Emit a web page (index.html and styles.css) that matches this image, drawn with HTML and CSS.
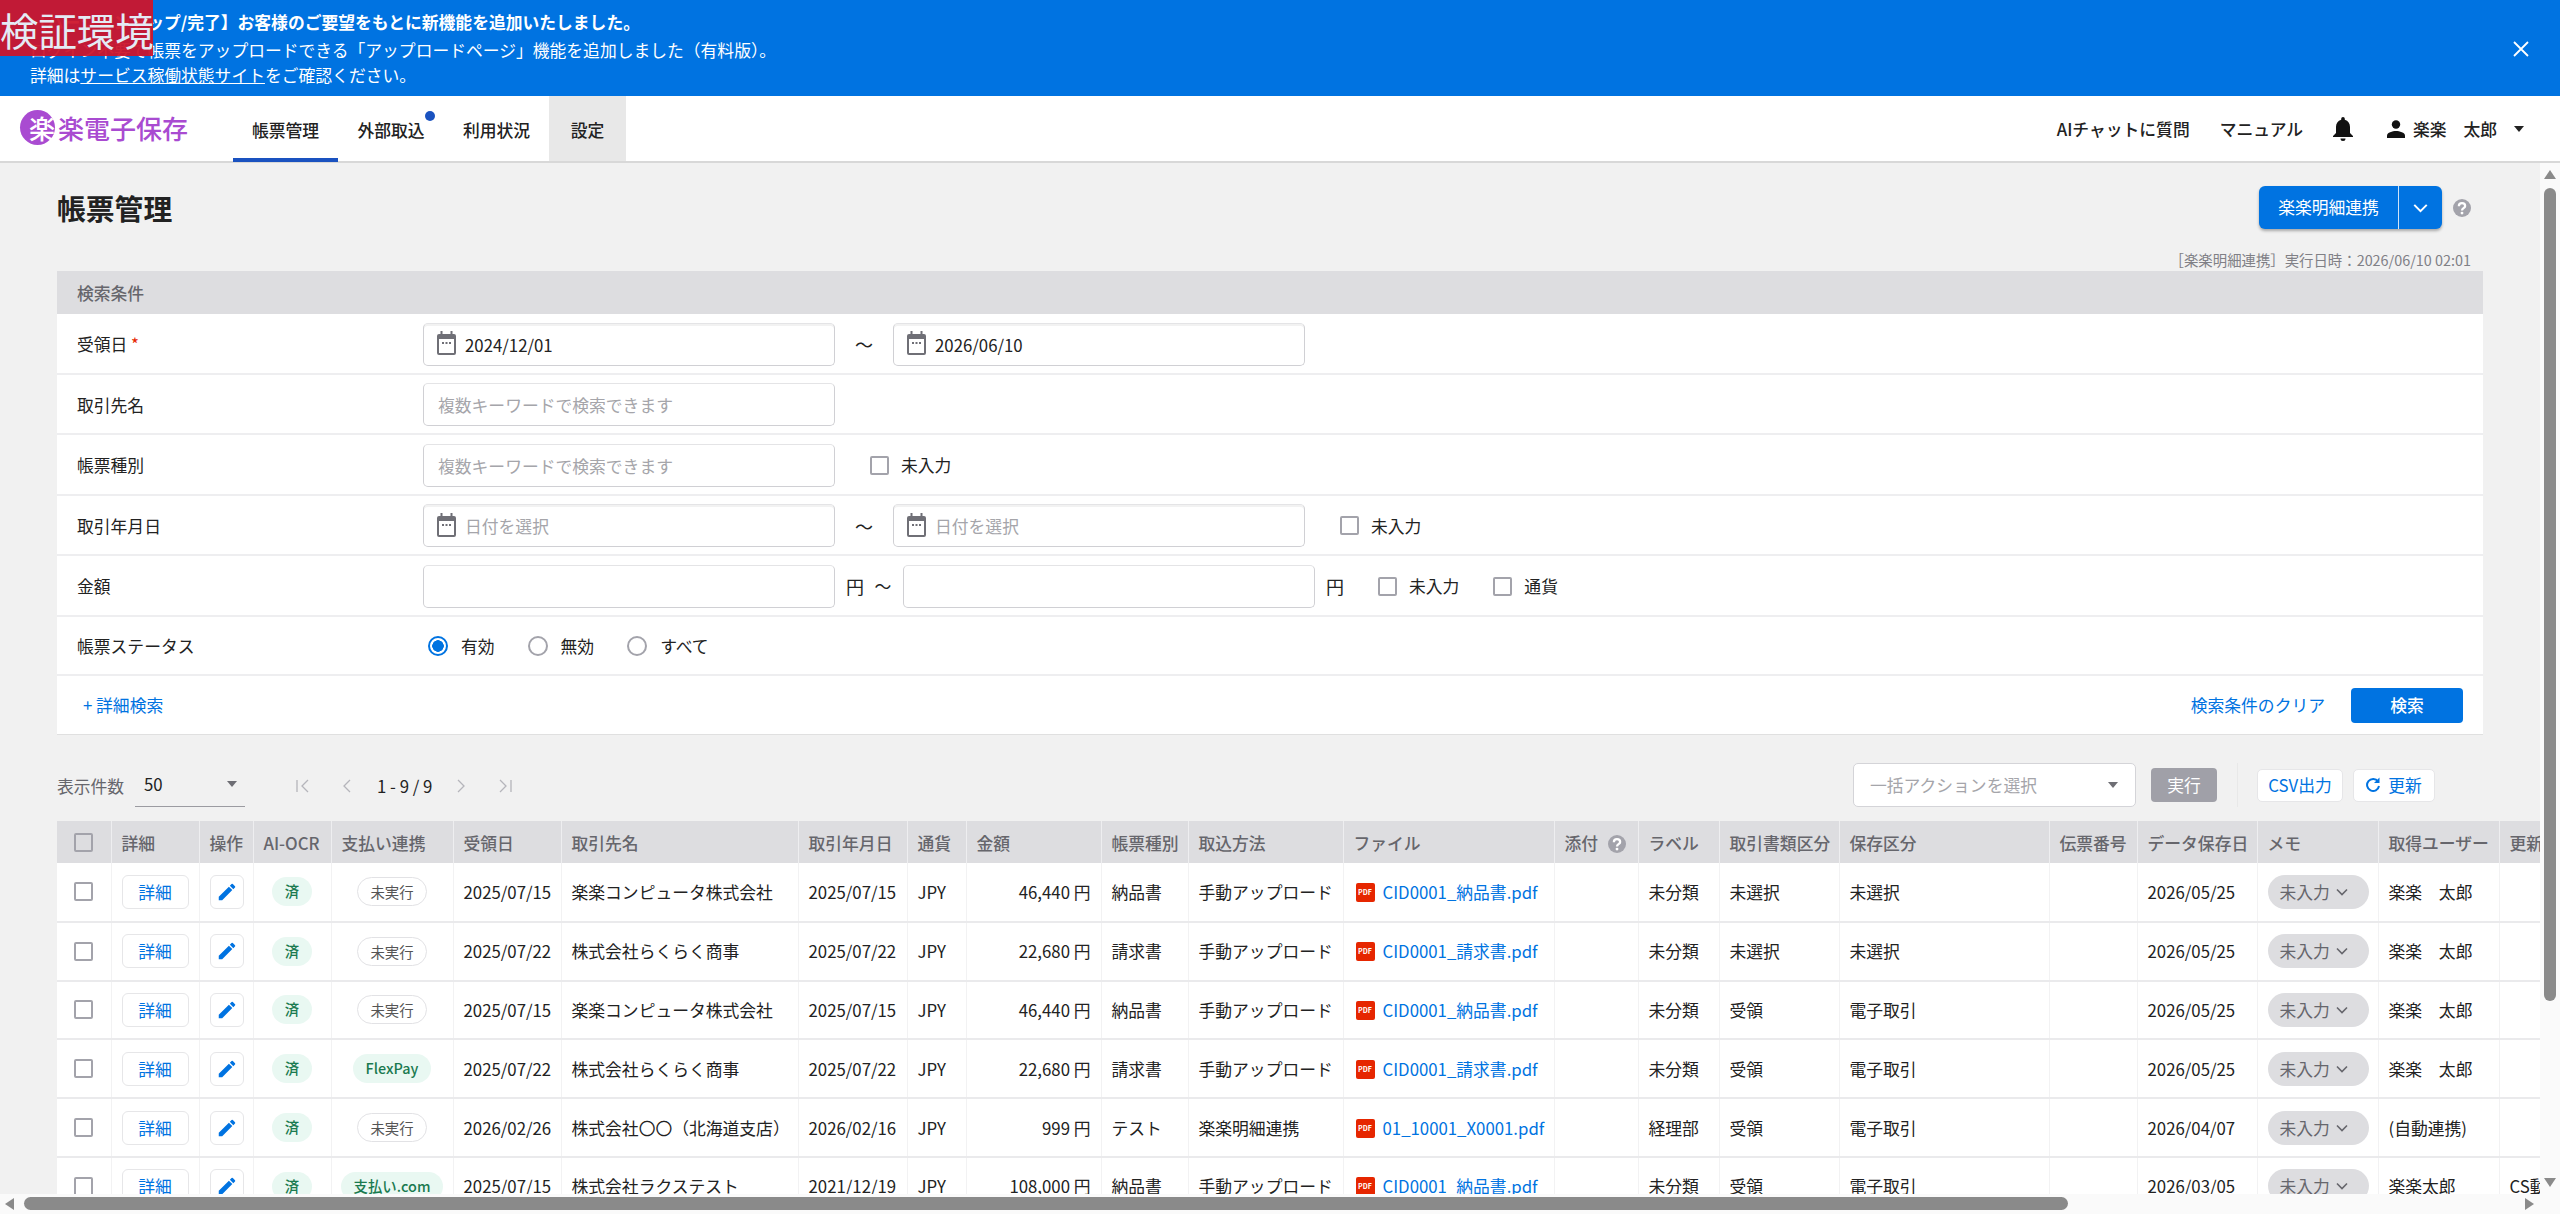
FILE: index.html
```html
<!DOCTYPE html>
<html lang="ja">
<head>
<meta charset="utf-8">
<title>楽楽電子保存</title>
<link rel="stylesheet" href="styles.css">
</head>
<body>
<svg class="defs" width="0" height="0" aria-hidden="true">
  <defs>
    <symbol id="cal" viewBox="0 0 19 24"><path fill="#6f6f76" d="M3.500 0h2v3h8V0h2v3H17a2 2 0 0 1 2 2v17a2 2 0 0 1-2 2H2a2 2 0 0 1-2-2V5a2 2 0 0 1 2-2h1.500z"/><rect x="2" y="8" width="15" height="14" fill="#fff"/><rect x="5" y="11" width="2" height="2" fill="#6f6f76"/><rect x="8.500" y="11" width="2" height="2" fill="#6f6f76"/><rect x="12" y="11" width="2" height="2" fill="#6f6f76"/></symbol>
    <symbol id="pen" viewBox="0 0 24 24"><path fill="#0073e1" d="M3 17.250V21h3.750L17.810 9.940l-3.750-3.750L3 17.250zM20.710 7.040a1 1 0 0 0 0-1.410l-2.340-2.340a1 1 0 0 0-1.410 0l-1.830 1.830 3.750 3.750 1.830-1.830z"/></symbol>
    <symbol id="help" viewBox="0 0 24 24"><circle cx="12" cy="12" r="12" fill="#a3a3ab"/><path fill="none" stroke="#fff" stroke-width="3" d="M7.800 9.500c0-2.500 1.900-4 4.200-4s4.200 1.500 4.200 3.700c0 3-4.200 3-4.200 6"/><circle cx="12" cy="18.800" r="1.900" fill="#fff"/></symbol>
    <symbol id="chev" viewBox="0 0 12 8"><path fill="none" stroke="currentColor" stroke-width="1.600" d="M1 1.500l5 5 5-5"/></symbol>
  </defs>
</svg>
<div class="env-tag">検証環境</div>
<div class="page">
  <header class="banner">
    <div class="banner-text">
      <p class="banner-title">【バージョンアップ/完了】お客様のご要望をもとに新機能を追加いたしました。</p>
      <p>ログイン不要で帳票をアップロードできる「アップロードページ」機能を追加しました（有料版）。</p>
      <p>詳細は<a class="banner-link">サービス稼働状態サイト</a>をご確認ください。</p>
    </div>
    <svg class="banner-close" viewBox="0 0 16 16" width="16" height="16"><path stroke="#fff" stroke-width="1.800" d="M1 1l14 14M15 1L1 15"/></svg>
  </header>
  <nav class="nav">
    <div class="logo">
      <span class="logo-mark">楽</span><span class="logo-text">楽電子保存</span>
    </div>
    <a class="tab tab-active">帳票管理</a>
    <a class="tab tab-dot">外部取込</a>
    <a class="tab">利用状況</a>
    <a class="tab tab-shade">設定</a>
    <div class="nav-right">
      <a class="nav-link">AIチャットに質問</a>
      <a class="nav-link">マニュアル</a>
      <svg class="bell" viewBox="0 0 20 24" width="20" height="24"><path fill="#111" d="M10 0a1.800 1.800 0 0 1 1.800 1.800v.9C15.200 3.600 17 6.500 17 10v6l3 3v1H0v-1l3-3v-6c0-3.500 1.800-6.400 5.200-7.300v-.9A1.800 1.800 0 0 1 10 0zM7.500 21.500h5a2.500 2.500 0 0 1-5 0z"/></svg>
      <div class="user">
        <svg viewBox="0 0 18 18" width="18" height="18"><circle cx="9" cy="4.500" r="4.200" fill="#111"/><path fill="#111" d="M0 18v-2.500C0 12.500 5.500 11 9 11s9 1.500 9 4.500V18z"/></svg>
        <span>楽楽　太郎</span>
        <i class="caret caret-dark"></i>
      </div>
    </div>
  </nav>
  <main class="main">
    <div class="content">
      <div class="title-row">
        <h1>帳票管理</h1>
        <div class="title-actions">
          <div class="split-btn"><span class="split-main">楽楽明細連携</span><span class="split-arrow"><svg width="15" height="10"><use href="#chev"/></svg></span></div>
          <svg class="help" width="18" height="18"><use href="#help"/></svg>
        </div>
      </div>
      <p class="run-date">［楽楽明細連携］実行日時：2026/06/10 02:01</p>

      <section class="panel">
        <div class="panel-head">検索条件</div>
        <div class="frow">
          <label class="flabel">受領日 <em>*</em></label>
          <div class="input input-date"><svg width="19" height="24"><use href="#cal"/></svg><span>2024/12/01</span></div>
          <span class="tilde">～</span>
          <div class="input input-date"><svg width="19" height="24"><use href="#cal"/></svg><span>2026/06/10</span></div>
        </div>
        <div class="frow">
          <label class="flabel">取引先名</label>
          <div class="input"><span class="ph">複数キーワードで検索できます</span></div>
        </div>
        <div class="frow">
          <label class="flabel">帳票種別</label>
          <div class="input"><span class="ph">複数キーワードで検索できます</span></div>
          <label class="check check-a"><i class="box"></i>未入力</label>
        </div>
        <div class="frow">
          <label class="flabel">取引年月日</label>
          <div class="input input-date"><svg width="19" height="24"><use href="#cal"/></svg><span class="ph">日付を選択</span></div>
          <span class="tilde">～</span>
          <div class="input input-date"><svg width="19" height="24"><use href="#cal"/></svg><span class="ph">日付を選択</span></div>
          <label class="check check-a"><i class="box"></i>未入力</label>
        </div>
        <div class="frow">
          <label class="flabel">金額</label>
          <div class="input"></div>
          <span class="yen">円</span><span class="tilde-s">～</span>
          <div class="input"></div>
          <span class="yen">円</span>
          <label class="check check-b"><i class="box"></i>未入力</label>
          <label class="check check-c"><i class="box"></i>通貨</label>
        </div>
        <div class="frow frow-radio">
          <label class="flabel">帳票ステータス</label>
          <label class="radio radio-first"><i class="dot dot-on"></i>有効</label>
          <label class="radio"><i class="dot"></i>無効</label>
          <label class="radio"><i class="dot"></i>すべて</label>
        </div>
        <div class="frow frow-foot">
          <a class="more">+ 詳細検索</a>
          <a class="clear">検索条件のクリア</a>
          <span class="search-btn">検索</span>
        </div>
      </section>

      <div class="tools">
        <span class="tools-label">表示件数</span>
        <div class="per-page"><span>50</span><i class="caret"></i></div>
        <div class="pager">
          <svg width="16" height="16" viewBox="0 0 16 16"><path fill="none" stroke="#b5b5bb" stroke-width="1.300" d="M2 2v12M13 2L7 8l6 6"/></svg>
          <svg width="16" height="16" viewBox="0 0 16 16"><path fill="none" stroke="#b5b5bb" stroke-width="1.300" d="M11 2L5 8l6 6"/></svg>
          <span>1 - 9 / 9</span>
          <svg width="16" height="16" viewBox="0 0 16 16"><path fill="none" stroke="#b5b5bb" stroke-width="1.300" d="M5 2l6 6-6 6"/></svg>
          <svg width="16" height="16" viewBox="0 0 16 16"><path fill="none" stroke="#b5b5bb" stroke-width="1.300" d="M3 2l6 6-6 6M14 2v12"/></svg>
        </div>
        <div class="bulk"><span class="ph">一括アクションを選択</span><i class="caret"></i></div>
        <span class="run-btn">実行</span>
        <i class="vline"></i>
        <span class="ghost ghost-csv">CSV出力</span>
        <span class="ghost ghost-up"><svg width="14" height="16" viewBox="0 0 14 16"><path fill="none" stroke="#0073e1" stroke-width="2" d="M12 4.500A6 6 0 1 0 13 9"/><path fill="#0073e1" d="M13.500 0.500v5.500H8z"/></svg>更新</span>
      </div>

      <div class="table-wrap">
        <table class="grid">
          <colgroup>
            <col class="c-w54"><col class="c-w88"><col class="c-w54"><col class="c-w78"><col class="c-w122"><col class="c-w108"><col class="c-w237"><col class="c-w109"><col class="c-w59"><col class="c-w135"><col class="c-w87"><col class="c-w155"><col class="c-w211"><col class="c-w84"><col class="c-w81"><col class="c-w120"><col class="c-w210"><col class="c-w88"><col class="c-w120"><col class="c-w121"><col class="c-w121"><col class="c-w120">
          </colgroup>
          <thead>
            <tr>
              <th class="ctr"><i class="box"></i></th><th>詳細</th><th>操作</th><th>AI-OCR</th><th>支払い連携</th><th>受領日</th><th>取引先名</th><th>取引年月日</th><th>通貨</th><th>金額</th><th>帳票種別</th><th>取込方法</th><th>ファイル</th>
              <th>添付 <svg class="help-th" width="18" height="18"><use href="#help"/></svg></th>
              <th>ラベル</th><th>取引書類区分</th><th>保存区分</th><th>伝票番号</th><th>データ保存日</th><th>メモ</th><th>取得ユーザー</th><th>更新ユーザー</th>
            </tr>
          </thead>
          <tbody id="rows">
            <tr>
              <td class="ctr"><i class="box"></i></td><td><span class="detail">詳細</span></td><td><span class="edit"><svg width="22" height="22"><use href="#pen"/></svg></span></td><td class="ctr"><span class="chip chip-ok">済</span></td><td class="ctr"><span class="chip chip-off">未実行</span></td>
              <td>2025/07/15</td><td>楽楽コンピュータ株式会社</td><td>2025/07/15</td><td>JPY</td><td class="num">46,440 円</td><td>納品書</td><td>手動アップロード</td><td><span class="pdf">PDF</span><a class="file">CID0001_納品書.pdf</a></td><td></td><td>未分類</td><td>未選択</td><td>未選択</td><td></td><td>2026/05/25</td><td><span class="memo">未入力<svg width="12" height="8"><use href="#chev"/></svg></span></td><td>楽楽　太郎</td><td></td>
            </tr>
            <tr>
              <td class="ctr"><i class="box"></i></td><td><span class="detail">詳細</span></td><td><span class="edit"><svg width="22" height="22"><use href="#pen"/></svg></span></td><td class="ctr"><span class="chip chip-ok">済</span></td><td class="ctr"><span class="chip chip-off">未実行</span></td>
              <td>2025/07/22</td><td>株式会社らくらく商事</td><td>2025/07/22</td><td>JPY</td><td class="num">22,680 円</td><td>請求書</td><td>手動アップロード</td><td><span class="pdf">PDF</span><a class="file">CID0001_請求書.pdf</a></td><td></td><td>未分類</td><td>未選択</td><td>未選択</td><td></td><td>2026/05/25</td><td><span class="memo">未入力<svg width="12" height="8"><use href="#chev"/></svg></span></td><td>楽楽　太郎</td><td></td>
            </tr>
            <tr>
              <td class="ctr"><i class="box"></i></td><td><span class="detail">詳細</span></td><td><span class="edit"><svg width="22" height="22"><use href="#pen"/></svg></span></td><td class="ctr"><span class="chip chip-ok">済</span></td><td class="ctr"><span class="chip chip-off">未実行</span></td>
              <td>2025/07/15</td><td>楽楽コンピュータ株式会社</td><td>2025/07/15</td><td>JPY</td><td class="num">46,440 円</td><td>納品書</td><td>手動アップロード</td><td><span class="pdf">PDF</span><a class="file">CID0001_納品書.pdf</a></td><td></td><td>未分類</td><td>受領</td><td>電子取引</td><td></td><td>2026/05/25</td><td><span class="memo">未入力<svg width="12" height="8"><use href="#chev"/></svg></span></td><td>楽楽　太郎</td><td></td>
            </tr>
            <tr>
              <td class="ctr"><i class="box"></i></td><td><span class="detail">詳細</span></td><td><span class="edit"><svg width="22" height="22"><use href="#pen"/></svg></span></td><td class="ctr"><span class="chip chip-ok">済</span></td><td class="ctr"><span class="chip chip-on">FlexPay</span></td>
              <td>2025/07/22</td><td>株式会社らくらく商事</td><td>2025/07/22</td><td>JPY</td><td class="num">22,680 円</td><td>請求書</td><td>手動アップロード</td><td><span class="pdf">PDF</span><a class="file">CID0001_請求書.pdf</a></td><td></td><td>未分類</td><td>受領</td><td>電子取引</td><td></td><td>2026/05/25</td><td><span class="memo">未入力<svg width="12" height="8"><use href="#chev"/></svg></span></td><td>楽楽　太郎</td><td></td>
            </tr>
            <tr>
              <td class="ctr"><i class="box"></i></td><td><span class="detail">詳細</span></td><td><span class="edit"><svg width="22" height="22"><use href="#pen"/></svg></span></td><td class="ctr"><span class="chip chip-ok">済</span></td><td class="ctr"><span class="chip chip-off">未実行</span></td>
              <td>2026/02/26</td><td>株式会社〇〇（北海道支店）</td><td>2026/02/16</td><td>JPY</td><td class="num">999 円</td><td>テスト</td><td>楽楽明細連携</td><td><span class="pdf">PDF</span><a class="file">01_10001_X0001.pdf</a></td><td></td><td>経理部</td><td>受領</td><td>電子取引</td><td></td><td>2026/04/07</td><td><span class="memo">未入力<svg width="12" height="8"><use href="#chev"/></svg></span></td><td>(自動連携)</td><td></td>
            </tr>
            <tr>
              <td class="ctr"><i class="box"></i></td><td><span class="detail">詳細</span></td><td><span class="edit"><svg width="22" height="22"><use href="#pen"/></svg></span></td><td class="ctr"><span class="chip chip-ok">済</span></td><td class="ctr"><span class="chip chip-on">支払い.com</span></td>
              <td>2025/07/15</td><td>株式会社ラクステスト</td><td>2021/12/19</td><td>JPY</td><td class="num">108,000 円</td><td>納品書</td><td>手動アップロード</td><td><span class="pdf">PDF</span><a class="file">CID0001_納品書.pdf</a></td><td></td><td>未分類</td><td>受領</td><td>電子取引</td><td></td><td>2026/03/05</td><td><span class="memo">未入力<svg width="12" height="8"><use href="#chev"/></svg></span></td><td>楽楽太郎</td><td>CS動作確認</td>
            </tr>
          </tbody>
        </table>
      </div>
    </div>
    <div class="vbar"><i class="arrow-up"></i><i class="vthumb"></i><i class="arrow-down"></i></div>
    <div class="hbar"><i class="arrow-left"></i><i class="hthumb"></i><i class="arrow-right"></i></div>
  </main>
</div>
</body>
</html>
```
FILE: styles.css
```css
* { box-sizing: border-box; }
html, body { margin: 0; height: 100%; overflow: hidden; }
body { font-family: "Noto Sans CJK JP", "Noto Sans", sans-serif; font-size: 16.8px; color: #222; background: #f1f1f1; }
p, h1 { margin: 0; }
i { display: block; font-style: normal; }
.defs { position: absolute; }
.page { display: flex; flex-direction: column; height: 1214px; }

.env-tag { position: absolute; left: 0; top: 0; width: 153px; height: 56px; background: rgba(205, 20, 42, .94); color: #e4ebf5; font-size: 38.400px; line-height: 58px; white-space: nowrap; overflow: hidden; z-index: 5; }

.banner { flex: none; height: 96px; background: #0073e1; color: #fff; display: flex; align-items: center; justify-content: space-between; padding: 0 31px 0 30px; }
.banner-text { line-height: 25px; padding-top: 1px; }
.banner-title { font-weight: 700; line-height: 26px; padding-bottom: 3px; }
.banner-link { text-decoration: underline; }
.banner-close { margin-top: 1px; }

.nav { flex: none; height: 67px; background: #fff; border-bottom: 2px solid #d8d8d8; display: flex; align-items: stretch; position: relative; }
.logo { width: 233px; display: flex; align-items: center; padding-left: 20px; padding-bottom: 3px; color: #a94bd1; }
.logo-mark { width: 35px; height: 35px; border-radius: 50%; background: #a94bd1; color: #fff; font-size: 26px; font-weight: 500; line-height: 35px; text-align: right; white-space: nowrap; }
.logo-text { font-size: 26px; font-weight: 500; margin-left: 3px; }
.tab { width: 105px; display: flex; align-items: center; justify-content: center; font-weight: 500; position: relative; padding-top: 2px; }
.tab-active { border-bottom: 4px solid #1a52c0; padding-top: 6px; margin-bottom: -1px; }
.tab-dot { width: 106px; }
.tab-dot::after { content: ""; position: absolute; left: 87px; top: 15px; width: 10px; height: 10px; border-radius: 50%; background: #1a52c0; }
.tab-shade { width: 77px; background: #e8e8e8; }
.nav-right { margin-left: auto; display: flex; align-items: center; padding: 0 36px 0 0; font-weight: 500; }
.nav-link { margin-right: 30px; }
.bell { margin-right: 34px; }
.user { display: flex; align-items: center; gap: 8px; }
.caret { width: 0; height: 0; border-left: 5px solid transparent; border-right: 5px solid transparent; border-top: 6px solid #6e6e74; }
.caret-dark { border-top-color: #222; margin-left: 9px; }

.main { flex: 1; position: relative; overflow: hidden; min-height: 0; }
.content { width: 2540px; height: 100%; overflow: hidden; padding: 23px 0 0 57px; }
.title-row { display: flex; justify-content: space-between; align-items: center; height: 43px; padding-right: 69px; }
h1 { font-size: 28.800px; font-weight: 700; line-height: 43px; }
.title-actions { display: flex; align-items: center; gap: 11px; }
.split-btn { display: flex; height: 43px; width: 183px; background: #0073e1; color: #fff; border-radius: 6px; box-shadow: 0 2px 3px rgba(0,0,0,.3); align-items: center; }
.split-main { width: 140px; text-align: center; border-right: 1px solid #cfe3f8; line-height: 43px; }
.split-arrow { flex: 1; display: flex; justify-content: center; color: #fff; }
.help { display: block; }
.run-date { font-size: 14.400px; color: #808086; text-align: right; padding-right: 69px; line-height: 20px; margin-top: 21px; }
.panel { width: 2426px; margin-top: 1px; background: #fff; border-bottom: 1px solid #e0e0e0; }
.panel-head { height: 43px; background: #dddde0; padding: 1px 0 0 20px; line-height: 43px; font-weight: 500; color: #66666c; }
.frow { height: 60.500px; display: flex; align-items: center; padding: 2px 0 0 20px; border-bottom: 2px solid #eeeef0; }
.frow-radio { height: 59.500px; }
.flabel { width: 346px; flex: none; }
.flabel em { color: #e62600; font-style: normal; }
.input { width: 412px; height: 43px; flex: none; border: 1px solid #d0d0d4; border-top-color: #e4e4e6; border-radius: 5px; display: flex; align-items: center; padding: 1px 0 0 14px; background: #fff; }
.input-date svg { margin-right: 9px; margin-top: -3px; }
.input-date { box-shadow: inset 0 2px 0 #f2f2f2; padding-left: 13px; }
.ph { color: #a5a5aa; }
.tilde { width: 58px; text-align: center; flex: none; font-size: 18px; }
.yen { margin-left: 11px; width: 17px; flex: none; font-size: 18px; }
.tilde-s { width: 40px; text-align: center; flex: none; }
.check { display: flex; align-items: center; gap: 12px; flex: none; }
.check-a { margin-left: 35px; }
.check-b { margin-left: 35px; }
.check-c { margin-left: 34px; }
.box { width: 19px; height: 19px; border: 2px solid #a3a3ab; border-radius: 2px; background: #fff; flex: none; }
.radio { display: flex; align-items: center; gap: 13px; margin-right: 33px; }
.radio-first { margin-left: 5px; }
.dot { width: 20px; height: 20px; border-radius: 50%; border: 2px solid #a3a3ab; background: #fff; }
.dot-on { border-color: #0073e1; background: radial-gradient(circle, #0073e1 0 5.500px, #fff 6px); }
.frow-foot { height: 58px; border-bottom: 0; padding: 0 0 0 26px; }
.more { color: #0073e1; }
.clear { color: #0073e1; margin-left: auto; }
.search-btn { width: 112px; height: 35px; line-height: 35px; text-align: center; background: #0073e1; color: #fff; border-radius: 4px; margin: 0 20px 0 26px; font-weight: 500; }

.tools { display: flex; align-items: center; height: 44px; margin-top: 28px; }
.tools-label { color: #66666c; width: 78px; flex: none; padding-top: 2px; }
.per-page { width: 110px; height: 44px; border-bottom: 1px solid #9b9ba1; display: flex; align-items: center; justify-content: space-between; padding: 0 8px 1px 9px; flex: none; }
.pager { margin-left: 50px; display: flex; align-items: center; width: 220px; flex: none; padding-top: 1px; }
.pager svg { flex: none; }
.pager span { margin: 0 21px 0 22px; white-space: nowrap; }
.pager svg + svg { margin-left: 28px; }
.bulk { margin-left: auto; width: 283px; height: 44px; flex: none; background: #fff; border: 1px solid #d4d4d8; border-radius: 5px; display: flex; align-items: center; justify-content: space-between; padding: 0 17px 0 16px; }
.run-btn { margin-left: 15px; width: 66px; height: 34px; line-height: 34px; text-align: center; background: #a0a0a8; color: #fff; border-radius: 4px; }
.vline { width: 1px; height: 44px; background: #e8e8e8; margin: 0 19px 0 20px; }
.ghost { height: 33px; background: #fff; border: 1px solid #e6e6e8; border-radius: 5px; color: #0073e1; display: flex; align-items: center; justify-content: center; gap: 8px; }
.ghost-csv { width: 86px; }
.ghost-up { width: 82px; margin: 0 105px 0 10px; }

.table-wrap { margin-top: 14px; width: 2483px; overflow: hidden; }
.grid { table-layout: fixed; border-collapse: collapse; width: 2562px; }
.c-w54 { width: 54px; } .c-w88 { width: 88px; } .c-w78 { width: 78px; } .c-w122 { width: 122px; } .c-w108 { width: 108px; } .c-w237 { width: 237px; } .c-w109 { width: 109px; } .c-w59 { width: 59px; } .c-w135 { width: 135px; } .c-w87 { width: 87px; } .c-w155 { width: 155px; } .c-w211 { width: 211px; } .c-w84 { width: 84px; } .c-w81 { width: 81px; } .c-w120 { width: 120px; } .c-w210 { width: 210px; } .c-w121 { width: 121px; }
.grid th { height: 42px; background: #dddde0; color: #66666c; font-weight: 500; text-align: left; padding: 1px 10px 0; white-space: nowrap; overflow: hidden; border-right: 1px solid #eeeef0; }
.grid th .box { background: transparent; }
.grid th .help-th { vertical-align: -3px; margin-left: 6px; }
.grid td { height: 58.800px; background: #fff; padding: 0 10px; white-space: nowrap; overflow: hidden; border-right: 1px solid #f2f2f3; border-bottom: 2px solid #eaeaec; }
.ctr .box { margin: 0 auto; }
.grid th.ctr { padding: 0; }
.grid td.ctr { padding: 0; text-align: center; }
.grid .num { text-align: right; }
.detail { display: block; width: 67px; height: 34px; line-height: 33px; text-align: center; border: 1px solid #e6e6e8; border-radius: 6px; color: #0073e1; }
.edit { display: flex; align-items: center; justify-content: center; width: 34px; height: 34px; border: 1px solid #e6e6e8; border-radius: 6px; }
.chip { display: inline-block; height: 29px; line-height: 28px; border-radius: 15px; font-size: 14.400px; padding: 0 13px; vertical-align: middle; }
.chip-ok, .chip-on { background: #e9f8f2; color: #1a7a50; font-weight: 500; }
.chip-on { padding: 0 12.500px; }
.chip-off { background: #fff; border: 1px solid #e2e2e5; color: #555; padding: 0 12px; }
.pdf { display: inline-block; width: 19px; height: 19px; line-height: 19px; background: #e62600; border-radius: 2px; color: #fff; font-size: 7px; font-weight: 700; text-align: center; vertical-align: -3px; margin: 0 8px 0 2px; overflow: hidden; }
.file { color: #0073e1; }
.memo { display: flex; align-items: center; gap: 6px; width: 101px; height: 34px; border-radius: 17px; background: #dddde0; color: #66666c; padding-left: 12px; }
.memo svg { color: #66666c; }

.vbar { position: absolute; right: 0; top: 0; bottom: 20px; width: 20px; background: #fafafa; }
.vthumb { position: absolute; left: 4px; top: 25px; width: 12px; height: 813px; border-radius: 6px; background: #8a8a8a; }
.arrow-up { position: absolute; left: 4px; top: 7px; border-left: 6px solid transparent; border-right: 6px solid transparent; border-bottom: 9px solid #8a8a8a; }
.arrow-down { position: absolute; left: 4px; bottom: 7px; border-left: 6px solid transparent; border-right: 6px solid transparent; border-top: 9px solid #8a8a8a; }
.hbar { position: absolute; left: 0; right: 0; bottom: 0; height: 20px; background: #fafafa; }
.hthumb { position: absolute; left: 24px; top: 3px; height: 13px; width: 2044px; border-radius: 7px; background: #8a8a8a; }
.arrow-left { position: absolute; left: 5px; top: 4px; border-top: 6px solid transparent; border-bottom: 6px solid transparent; border-right: 9px solid #8a8a8a; }
.arrow-right { position: absolute; right: 26px; top: 4px; border-top: 6px solid transparent; border-bottom: 6px solid transparent; border-left: 9px solid #8a8a8a; }
```
